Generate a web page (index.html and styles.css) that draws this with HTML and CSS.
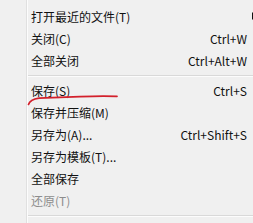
FILE: index.html
```html
<!DOCTYPE html>
<html lang="zh-CN">
<head>
<meta charset="utf-8">
<title>文件菜单</title>
<link rel="stylesheet" href="styles.css">
</head>
<body>
<div class="menu">
  <div class="item has-sub"><span class="label">打开最近的文件(T)</span><span class="arrow"></span></div>
  <div class="item"><span class="label">关闭(C)</span><span class="key">Ctrl+W</span></div>
  <div class="item"><span class="label">全部关闭</span><span class="key">Ctrl+Alt+W</span></div>
  <div class="sep"></div>
  <div class="item"><span class="label">保存(S)</span><span class="key">Ctrl+S</span></div>
  <div class="item"><span class="label">保存并压缩(M)</span></div>
  <div class="item"><span class="label">另存为(A)...</span><span class="key">Ctrl+Shift+S</span></div>
  <div class="item"><span class="label">另存为模板(T)...</span></div>
  <div class="item"><span class="label">全部保存</span></div>
  <div class="item disabled"><span class="label">还原(T)</span></div>
  <div class="sep"></div>
</div>
<svg class="scribble" width="253" height="223" viewBox="0 0 253 223">
  <path d="M28.5,104.5 Q30,99.5 39,98.2 L80,96.6 Q104,95.6 117,96.4" fill="none" stroke="#d3202b" stroke-width="1.7" stroke-linecap="round"/>
</svg>
</body>
</html>
```
FILE: styles.css
```css
html, body {
  margin: 0;
  padding: 0;
  background: #f0f0f0;
  overflow: hidden;
}
body {
  width: 253px;
  height: 223px;
  position: relative;
  font-family: "Noto Sans CJK SC", "Noto Sans", sans-serif;
  font-size: 12px;
  color: #111;
}
.menu {
  margin-left: 26px;
  border-left: 1px solid #e0e0e0;
  box-shadow: inset 1px 0 0 #fcfcfc;
  height: 223px;
  box-sizing: border-box;
  padding-top: 6px;
  display: flex;
  flex-direction: column;
}
.item {
  height: 22px;
  display: flex;
  align-items: center;
  justify-content: space-between;
  padding-left: 4px;
  padding-right: 6px;
  line-height: 14px;
}
.item.disabled {
  color: #8d8d8d;
}
.key {
  white-space: nowrap;
}
.arrow {
  width: 0;
  height: 0;
  border-top: 4px solid transparent;
  border-bottom: 4px solid transparent;
  border-left: 4px solid #111;
  margin-right: -9px;
  margin-top: -3px;
}
.sep {
  height: 8px;
  box-sizing: border-box;
  padding-top: 3px;
  margin-left: 1px;
}
.sep::before {
  content: "";
  display: block;
  height: 1px;
  background: #d9d9d9;
  border-bottom: 1px solid #fcfcfc;
}
.scribble {
  position: absolute;
  left: 0;
  top: 0;
  pointer-events: none;
}
```
